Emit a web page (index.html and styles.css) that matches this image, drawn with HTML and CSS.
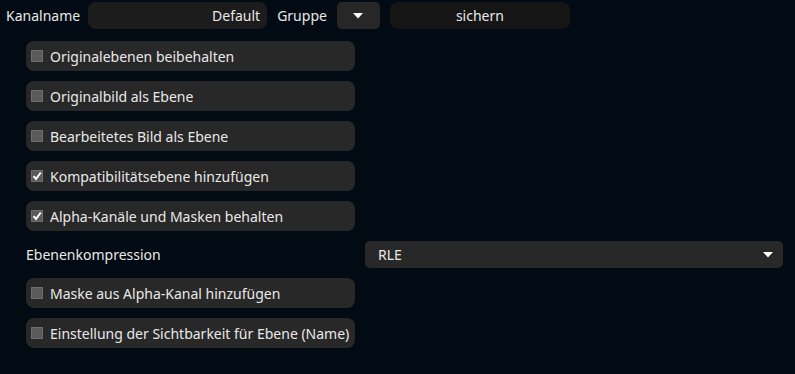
FILE: index.html
```html
<!DOCTYPE html>
<html lang="de">
<head>
<meta charset="utf-8">
<link rel="stylesheet" href="styles.css">
</head>
<body>
<div class="top">
  <span class="label">Kanalname</span>
  <div class="input">Default</div>
  <span class="label gruppe">Gruppe</span>
  <div class="dd"><svg width="10" height="6" viewBox="0 0 10 6"><path d="M0 0H10L5 5.5Z" fill="#fff"/></svg></div>
  <div class="btn">sichern</div>
</div>
<div class="list">
  <div class="row"><span class="cb"></span><span>Originalebenen beibehalten</span></div>
  <div class="row"><span class="cb"></span><span>Originalbild als Ebene</span></div>
  <div class="row"><span class="cb"></span><span>Bearbeitetes Bild als Ebene</span></div>
  <div class="row"><span class="cb on"><svg width="10" height="10" viewBox="0 0 10 10"><path d="M1.5 5.2L4 8L8.8 1.5" fill="none" stroke="#fff" stroke-width="2"/></svg></span><span>Kompatibilitätsebene hinzufügen</span></div>
  <div class="row"><span class="cb on"><svg width="10" height="10" viewBox="0 0 10 10"><path d="M1.5 5.2L4 8L8.8 1.5" fill="none" stroke="#fff" stroke-width="2"/></svg></span><span>Alpha-Kanäle und Masken behalten</span></div>
  <div class="selrow">
    <span class="sellabel">Ebenenkompression</span>
    <div class="select"><span>RLE</span><svg width="10" height="6" viewBox="0 0 10 6"><path d="M0 0H10L5 5.5Z" fill="#fff"/></svg></div>
  </div>
  <div class="row"><span class="cb"></span><span>Maske aus Alpha-Kanal hinzufügen</span></div>
  <div class="row"><span class="cb"></span><span>Einstellung der Sichtbarkeit für Ebene (Name)</span></div>
</div>
</body>
</html>
```
FILE: styles.css
```css
html, body {
  margin: 0;
  background: #020b13;
  color: #e8e8e8;
  font-family: "Noto Sans", "Open Sans", sans-serif;
  font-size: 14px;
}
.top {
  display: flex;
  align-items: center;
  padding: 2px 0 0 6px;
  height: 27px;
}
.label { line-height: 27px; }
.input {
  margin-left: 8px;
  width: 179px;
  height: 27px;
  box-sizing: border-box;
  background: #1c1c1c;
  border-radius: 8px;
  text-align: right;
  padding-right: 7px;
  line-height: 27px;
}
.gruppe { margin-left: 10px; }
.dd {
  margin-left: 10px;
  width: 43px;
  height: 27px;
  background: #272727;
  border-radius: 5px;
  display: flex;
  align-items: center;
  justify-content: center;
}
.btn {
  margin-left: 10px;
  width: 180px;
  height: 27px;
  background: #151515;
  border-radius: 8px;
  text-align: center;
  line-height: 27px;
}
.list {
  margin: 12px 0 0 26px;
  display: flex;
  flex-direction: column;
  gap: 10px;
}
.row {
  width: 329px;
  height: 30px;
  background: #282828;
  border-radius: 8px;
  display: flex;
  align-items: center;
  padding-left: 5px;
  box-sizing: border-box;
}
.cb {
  width: 12px;
  height: 12px;
  box-sizing: border-box;
  background: #5a5a5a;
  border: 1px solid #6e6e6e;
  margin-right: 7px;
  display: flex;
  align-items: center;
  justify-content: center;
}
.selrow {
  display: flex;
  align-items: center;
  height: 27px;
}
.sellabel { width: 339px; }
.select {
  width: 418px;
  height: 27px;
  box-sizing: border-box;
  background: #282828;
  border-radius: 5px;
  display: flex;
  align-items: center;
  justify-content: space-between;
  padding: 0 10px 0 13px;
}
```
